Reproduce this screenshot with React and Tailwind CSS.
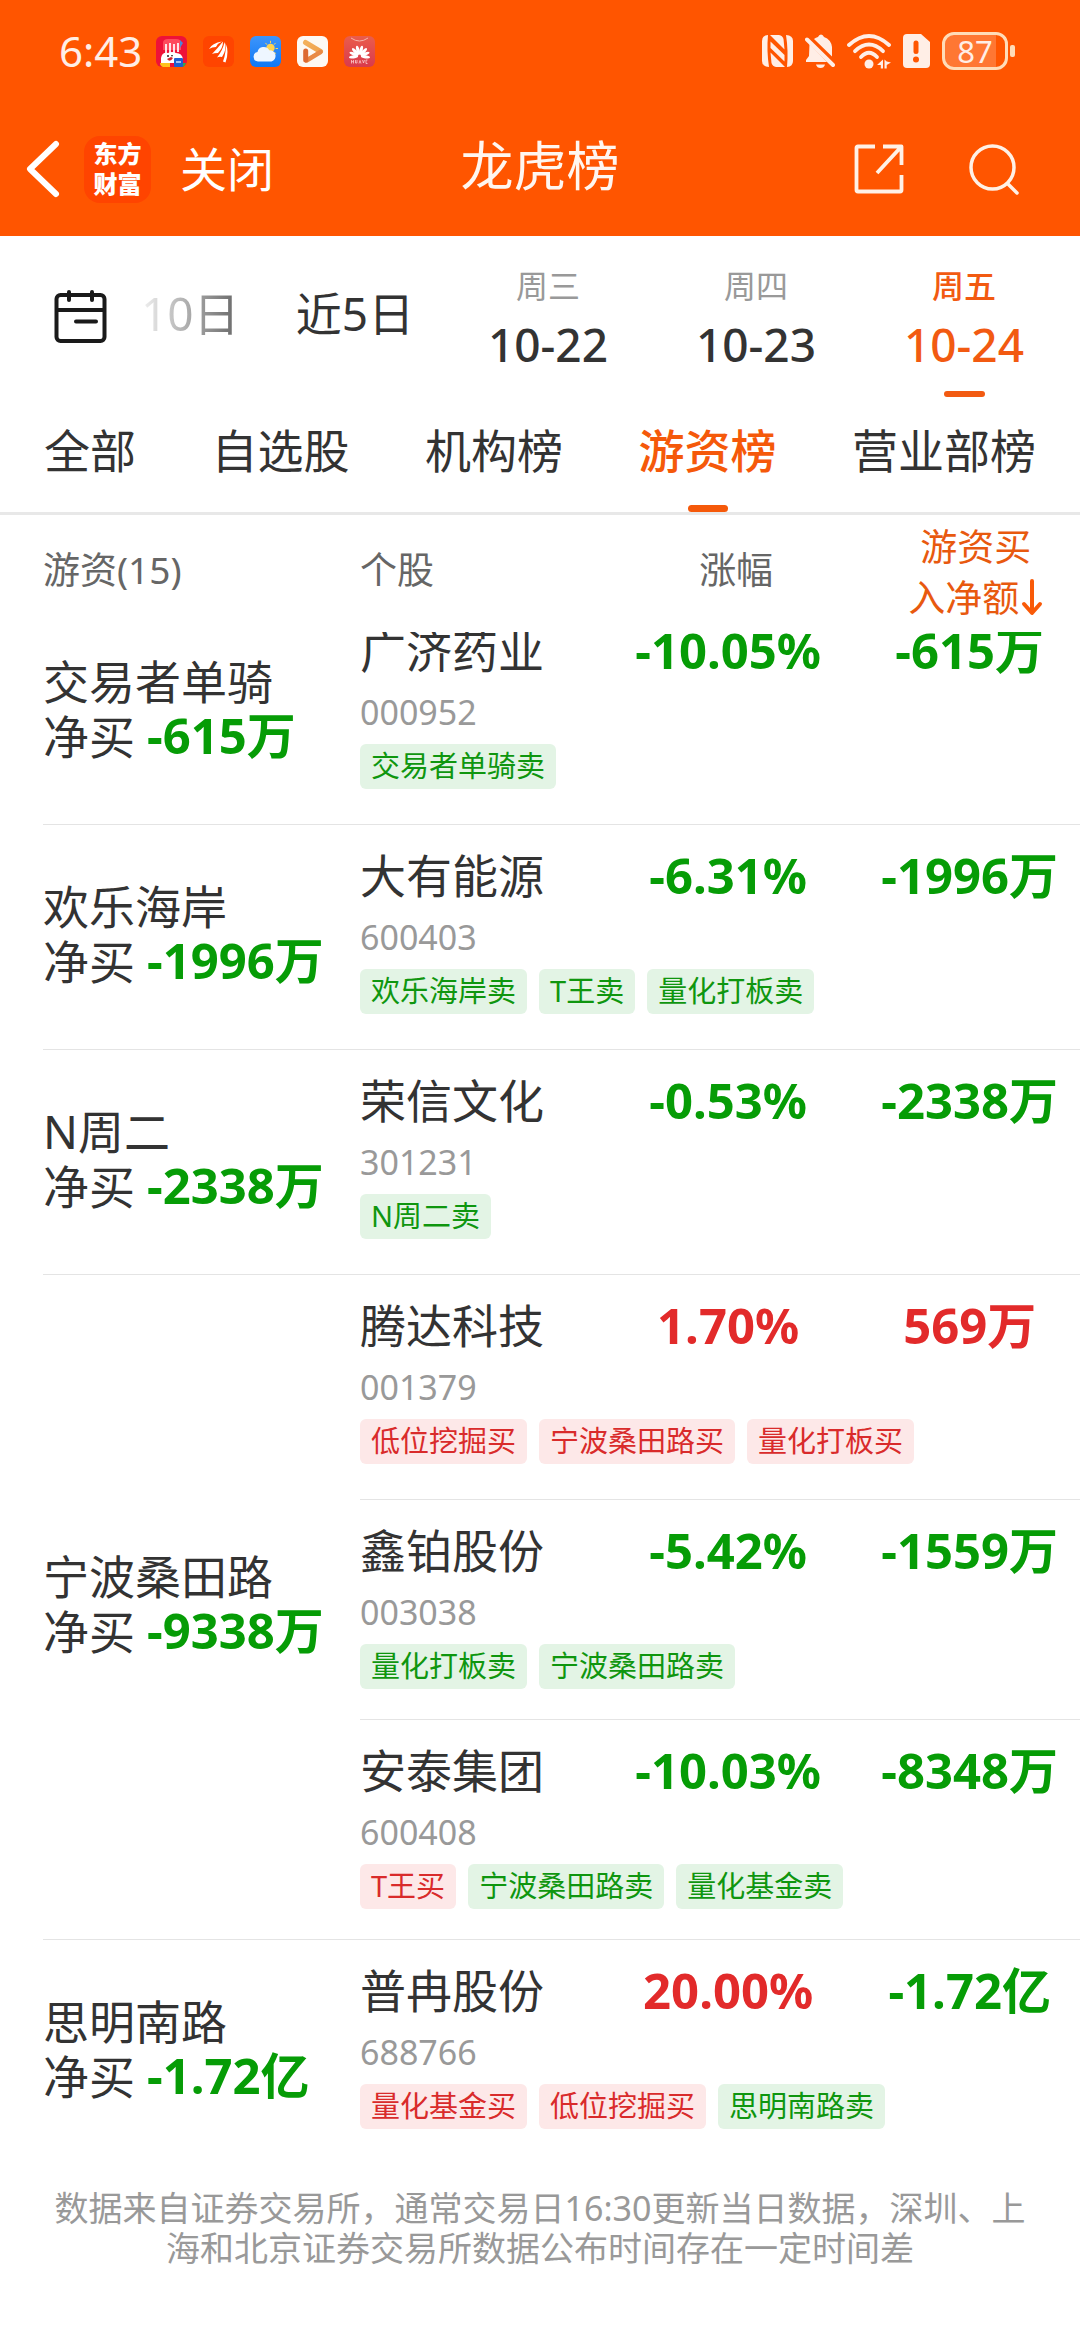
import React, { Fragment } from 'react';

const DATES = [
  { day: '周三', date: '10-22' },
  { day: '周四', date: '10-23' },
  { day: '周五', date: '10-24', active: true },
];

const TABS = ['全部', '自选股', '机构榜', '游资榜', '营业部榜'];

const GROUPS = [
  {
    name: '交易者单骑',
    net: '-615万',
    stocks: [
      { name: '广济药业', code: '000952', pct: '-10.05%', amount: '-615万', tags: ['交易者单骑卖'] },
    ],
  },
  {
    name: '欢乐海岸',
    net: '-1996万',
    stocks: [
      { name: '大有能源', code: '600403', pct: '-6.31%', amount: '-1996万', tags: ['欢乐海岸卖', 'T王卖', '量化打板卖'] },
    ],
  },
  {
    name: 'N周二',
    net: '-2338万',
    stocks: [
      { name: '荣信文化', code: '301231', pct: '-0.53%', amount: '-2338万', tags: ['N周二卖'] },
    ],
  },
  {
    name: '宁波桑田路',
    net: '-9338万',
    stocks: [
      { name: '腾达科技', code: '001379', pct: '1.70%', amount: '569万', tags: ['低位挖掘买', '宁波桑田路买', '量化打板买'] },
      { name: '鑫铂股份', code: '003038', pct: '-5.42%', amount: '-1559万', tags: ['量化打板卖', '宁波桑田路卖'], compact: true },
      { name: '安泰集团', code: '600408', pct: '-10.03%', amount: '-8348万', tags: ['T王买', '宁波桑田路卖', '量化基金卖'], compact: true },
    ],
  },
  {
    name: '思明南路',
    net: '-1.72亿',
    stocks: [
      { name: '普冉股份', code: '688766', pct: '20.00%', amount: '-1.72亿', tags: ['量化基金买', '低位挖掘买', '思明南路卖'] },
    ],
  },
];

const tone = (value) => (value.startsWith('-') ? 'text-[#069c06]' : 'text-[#e22a2a]');

/* ---------- status bar icons ---------- */

function SaleIcon() {
  return (
    <svg viewBox="0 0 31 31" className="size-[31px]">
      <rect width="31" height="31" rx="6" fill="#ee1238" />
      <path d="M7 14V7q0-4 5-4h8q5 0 5 4v7z" fill="#ff4b5c" />
      <path d="M10 8v9M14 7v10M18 8v9M22 7v9" stroke="#fff" strokeWidth="1.7" />
      <path d="M24 4l3 3-3 5z" fill="#4b86d8" />
      <path d="M5 22q1-6 7-5 4-2 8 0 6 0 7 6v4H5z" fill="#fff" />
      <circle cx="12" cy="20" r="1" fill="#222" />
      <path d="M11 23q3 4 6-1l-2-1z" fill="#d3222b" />
      <path d="M15 19l2 0-1 2z" fill="#222" />
      <path d="M4 27h10v4H7q-3-1-3-4z" fill="#ffc21c" />
      <rect x="18" y="22" width="9" height="9" rx="1" fill="#1f5fd0" />
      <path d="M20 26h5" stroke="#cfe1ff" strokeWidth="1.5" />
      <path d="M27 27h3q-1 3-3 4z" fill="#2fae4b" />
    </svg>
  );
}

function EastmoneyIcon() {
  return (
    <svg viewBox="0 0 31 31" className="size-[31px]">
      <rect width="31" height="31" rx="6" fill="#ff4400" />
      <g fill="#fff">
        <path d="M6 13Q9 7 19 5.500Q15 7 13 11Q9 11 6 13z" />
        <path d="M9 18Q14 13 20 5.500Q20 12 15 17Q11 17 9 18z" />
        <path d="M14 21.500Q20 14 21.500 6Q24 14 19 21Q16 20.500 14 21.500z" />
        <path d="M20 25.500Q23.500 16 22.500 7Q26.500 16 22.500 26.500z" />
      </g>
    </svg>
  );
}

function WeatherIcon() {
  return (
    <svg viewBox="0 0 31 31" className="size-[31px]">
      <defs>
        <linearGradient id="sky" x1="0" y1="0" x2="0" y2="1">
          <stop offset="0" stopColor="#3d95fb" />
          <stop offset="1" stopColor="#0f78f5" />
        </linearGradient>
      </defs>
      <rect width="31" height="31" rx="6" fill="url(#sky)" />
      <circle cx="20.500" cy="12" r="4.200" fill="#ffd451" />
      <path d="M20.500 5.200v1.600M25.300 7.200l-1 1.200M15.700 7.200l1 1.200M26 12.500h1.600M24.600 16.500l1.200 1" stroke="#ffd451" strokeWidth="1" strokeLinecap="round" />
      <path d="M8 25.500a4.800 4.800 0 0 1-.5-9.500 6.300 6.300 0 0 1 11.700-1.800 5.800 5.800 0 0 1 2.300 11.300z" fill="#eef6ff" />
    </svg>
  );
}

function VideoIcon() {
  return (
    <svg viewBox="0 0 31 31" className="size-[31px]">
      <defs>
        <linearGradient id="amber" x1="0" y1="0" x2="1" y2="1">
          <stop offset="0" stopColor="#f3b05c" />
          <stop offset="1" stopColor="#f0a24e" />
        </linearGradient>
      </defs>
      <rect width="31" height="31" rx="6" fill="#fdf9f4" />
      <path d="M8.500 6.500L23.500 15.500" stroke="url(#amber)" strokeWidth="5" strokeLinecap="round" />
      <path d="M23.500 16L9.500 24.500" stroke="#e98a45" strokeWidth="4.500" strokeLinecap="round" />
      <path d="M8.700 24V15" stroke="#dd6a32" strokeWidth="5" strokeLinecap="round" />
      <path d="M12 13l6 3.200-6 3.600z" fill="#fdf9f4" />
    </svg>
  );
}

function HuaweiIcon() {
  return (
    <svg viewBox="0 0 31 31" className="size-[31px]">
      <defs>
        <linearGradient id="rose" x1="0" y1="0" x2="0" y2="1">
          <stop offset="0" stopColor="#ea5d4c" />
          <stop offset="1" stopColor="#d93a4c" />
        </linearGradient>
      </defs>
      <rect width="31" height="31" rx="6" fill="url(#rose)" />
      <path d="M7 2q8.500 6 17 0" fill="none" stroke="#f7b3a8" strokeWidth="1" />
      <g fill="#fff">
        {[-98, -70, -43, -15, 15, 43, 70, 98].map((angle) => (
          <ellipse key={angle} cx="15.500" cy="14" rx="1.600" ry="4.600" transform={`rotate(${angle} 15.500 20)`} />
        ))}
      </g>
      <path d="M7.500 24v3.500M9.500 24v3.500M7.500 25.700h2M11.500 24v3h1.500v-3M15 27.500l1-3 1 3M18.500 24l1 3 1-3M22 24h1.500M22 27.500h1.500M22 24v3.500" stroke="#ffdcdc" strokeWidth=".7" fill="none" />
    </svg>
  );
}

function NfcIcon() {
  return (
    <svg viewBox="0 0 31 34" className="h-[34px] w-[31px]" fill="#ffeee6">
      <path d="M6 1Q0 1.500 0 7v20q0 5.500 7 6Q4.500 17 6 1z" />
      <path d="M25 33q6-.5 6-6V7q0-5.500-7-6 2.500 16 1 32z" />
      <path d="M8 1h9q3.500.5 4.500 4l1 10.500z" />
      <path d="M23 33h-9q-3.500-.5-4.500-4l-1-10.500z" />
      <path d="M8.500 7.500L22.500 21v6.500L8.500 14z" />
    </svg>
  );
}

function MutedBellIcon() {
  return (
    <svg viewBox="0 0 30 34" className="h-[34px] w-[30px]">
      <path d="M4.500 10L22 28H1v-2l3-4z" fill="#ffeee6" />
      <path d="M9 5q2-1.500 4-2 1-2.500 3-2.500T19 3q7 2.500 8 10v9.500z" fill="#ffeee6" />
      <path d="M11 30.500h9q-1 3.500-4.500 3.500T11 30.500z" fill="#ffeee6" />
      <path d="M2 5.500L28 31" stroke="#ffeee6" strokeWidth="4" strokeLinecap="round" />
    </svg>
  );
}

function WifiIcon() {
  return (
    <svg viewBox="0 0 44 35" className="h-[35px] w-[44px]">
      <g fill="none" stroke="#ffeee6" strokeWidth="3.800" strokeLinecap="round">
        <path d="M2 11Q22-7 42 11" />
        <path d="M8 17.200Q22 4 36 17.200" />
        <path d="M14 23Q22 14.500 30 23" />
      </g>
      <circle cx="22" cy="30" r="4.500" fill="#ffeee6" />
      <path d="M30 31l6-5.500v9h-2.200V31zM37.500 25.500v9h2.200V31l4.300-2.500-4.300-1z" fill="#ffeee6" />
    </svg>
  );
}

function SimAlertIcon() {
  return (
    <svg viewBox="0 0 27 34" className="h-[34px] w-[27px]">
      <path d="M4 0h14l9 8v22q0 4-4 4H4q-4 0-4-4V4q0-4 4-4z" fill="#ffeee6" />
      <path d="M13 9v8.500" stroke="#ff5500" strokeWidth="5" strokeLinecap="round" />
      <circle cx="13" cy="25.500" r="3" fill="#ff5500" />
    </svg>
  );
}

function Battery() {
  return (
    <div className="flex items-center gap-[2px]">
      <div className="flex h-[38px] w-[66px] items-center rounded-[12px] border-3 border-[#ffdcb8] bg-linear-to-r from-[#ff7733] from-85% to-[#ff5500] to-85%">
        <span className="w-full text-center text-[31px] leading-[32px] text-[#ffeee6]">87</span>
      </div>
      <div className="h-[12px] w-[5px] rounded-[2px] bg-[#ffdcb8]" />
    </div>
  );
}

/* ---------- page sections ---------- */

function StatusBar() {
  return (
    <div className="flex h-[102px] items-center justify-between pr-[65px] pl-[59px]">
      <div className="flex items-center gap-4">
        <span className="-mr-0.5 text-[42px] leading-[48px] text-[#ffeee6]">6:43</span>
        <SaleIcon />
        <EastmoneyIcon />
        <WeatherIcon />
        <VideoIcon />
        <HuaweiIcon />
      </div>
      <div className="flex items-center gap-3">
        <NfcIcon />
        <MutedBellIcon />
        <WifiIcon />
        <SimAlertIcon />
        <Battery />
      </div>
    </div>
  );
}

function NavBar() {
  return (
    <div className="grid h-[134px] grid-cols-[1fr_auto_1fr] items-center px-[26px] text-white">
      <div className="flex items-center">
        <button type="button" aria-label="返回">
          <svg viewBox="0 0 34 58" className="h-[58px] w-[34px]" fill="none" stroke="#fff" strokeWidth="6" strokeLinecap="round" strokeLinejoin="round">
            <path d="M30 4L4 29L30 54" />
          </svg>
        </button>
        <div className="ml-6 flex size-[67px] flex-col items-center justify-center rounded-[16px] bg-[#ff4400] text-[24px] leading-[30px] font-black">
          <span>东方</span>
          <span>财富</span>
        </div>
        <button type="button" className="ml-[29px] text-[47px] leading-[60px]">关闭</button>
      </div>
      <h1 className="pb-1.5 text-[53px] leading-[64px] text-[#fff6f0]">龙虎榜</h1>
      <div className="flex items-center justify-end gap-16 pr-[34px]">
        <button type="button" aria-label="分享">
          <svg viewBox="0 0 50 50" className="size-[50px]" fill="none" stroke="#fff1e6" strokeWidth="3.800" strokeLinejoin="round">
            <path d="M21 2.500H4q-1.500 0-1.500 1.500v42q0 1.500 1.500 1.500h42q1.500 0 1.500-1.500V31" />
            <path d="M29 2.500h18.500V21M47 3L23 29" />
          </svg>
        </button>
        <button type="button" aria-label="搜索">
          <svg viewBox="0 0 52 52" className="size-[52px]" fill="none" stroke="#fff1e6" strokeWidth="3.500" strokeLinecap="round">
            <circle cx="24.500" cy="24.500" r="21.500" />
            <path d="M39.500 40.500L49 50" />
          </svg>
        </button>
      </div>
    </div>
  );
}

function DateBar() {
  return (
    <div className="flex h-[166px] items-center pr-[12px] pl-[54px]">
      <button type="button" aria-label="选择日期" className="shrink-0 pb-1">
        <svg viewBox="0 0 54 54" className="size-[54px]" fill="none" stroke="#1a1a1a" strokeWidth="4" strokeLinecap="round">
          <rect x="2.500" y="5" width="48" height="46" rx="4" />
          <path d="M3 20h47M15 2v8M38 2v8M22 31.500h20" />
        </svg>
      </button>
      <button type="button" className="mb-3 ml-[33px] w-[93px] shrink-0 bg-linear-to-r from-[#f2f2f2] to-[#6e6e6e] bg-clip-text text-left text-[46px] leading-[60px] whitespace-nowrap text-transparent">
        10日
      </button>
      <button type="button" className="mb-3 flex-1 pl-8 text-center text-[46px] leading-[60px] whitespace-nowrap text-[#333]">
        近5日
      </button>
      {DATES.map(({ day, date, active }) => (
        <button
          key={date}
          type="button"
          className={`flex w-[208px] shrink-0 flex-col items-center self-stretch pt-6 ${active ? 'text-[#f25a11]' : 'text-[#333]'}`}
        >
          <span className={`text-[32px] leading-[52px] ${active ? 'font-medium' : 'text-[#999]'}`}>{day}</span>
          <span className="text-[46px] leading-[64px] font-medium">{date}</span>
          {active && <span className="mt-[15px] h-[6px] w-[41px] rounded-full bg-[#f25a11]" />}
        </button>
      ))}
    </div>
  );
}

function TabBar() {
  return (
    <div className="flex justify-between border-b-3 border-[#e8e8e8] px-11 pt-[14px]">
      {TABS.map((tab) => {
        const active = tab === '游资榜';
        return (
          <button
            key={tab}
            type="button"
            className={`flex h-24 flex-col items-center justify-between text-[46px] leading-[68px] ${active ? 'font-medium text-[#f5590a]' : 'text-[#333]'}`}
          >
            {tab}
            {active && <span className="h-[7px] w-[40px] rounded-full bg-[#f5590a]" />}
          </button>
        );
      })}
    </div>
  );
}

function Tag({ label }) {
  const sell = label.endsWith('卖');
  return (
    <span
      className={`flex h-[45px] items-center rounded-[6px] px-[11px] pb-0.5 text-[29px] leading-[40px] ${sell ? 'bg-[#e3f4e5] text-[#0f960f]' : 'bg-[#fde8e8] text-[#d92b2b]'}`}
    >
      {label}
    </span>
  );
}

function StockRows({ group, stock, first, clipped }) {
  const line = clipped ? '' : 'border-t border-[#e4e4e4]';
  const shift = clipped ? '-mt-8' : '';
  return (
    <Fragment>
      <tr className="align-top">
        {first && (
          <th scope="rowgroup" rowSpan={group.stocks.length * 2} className={`pb-2 text-left align-middle font-normal ${line}`}>
            <div className={shift}>
              <div className="text-[46px] leading-[54px] text-[#333]">{group.name}</div>
              <div className="text-[46px] leading-[54px] whitespace-nowrap text-[#333]">
                净买 <span className={`text-[49px] font-bold ${tone(group.net)}`}>{group.net}</span>
              </div>
            </div>
          </th>
        )}
        <td className={line}>
          <div className={`pt-[18px] pb-[2px] ${shift}`}>
            <div className="text-[46px] leading-[64px] whitespace-nowrap text-[#333]">{stock.name}</div>
            <div className="text-[34px] leading-[60px] text-[#999]">{stock.code}</div>
          </div>
        </td>
        <td className={line}>
          <div className={`pt-[18px] text-center text-[49px] leading-[64px] font-bold ${shift} ${tone(stock.pct)}`}>{stock.pct}</div>
        </td>
        <td className={`pl-3 ${line}`}>
          <div className={`pt-[18px] text-center text-[49px] leading-[64px] font-bold whitespace-nowrap ${shift} ${tone(stock.amount)}`}>{stock.amount}</div>
        </td>
      </tr>
      <tr>
        <td colSpan={3} className={stock.compact ? 'pb-[30px]' : 'pb-[35px]'}>
          <div className="flex gap-3">
            {stock.tags.map((tag) => (
              <Tag key={tag} label={tag} />
            ))}
          </div>
        </td>
      </tr>
    </Fragment>
  );
}

function Ranking() {
  return (
    <div className="pl-[43px]">
      <table className="w-full table-fixed">
        <colgroup>
          <col className="w-[317px]" />
          <col className="w-[24%]" />
          <col className="w-[23%]" />
          <col />
        </colgroup>
        <thead className="relative z-10 bg-white">
          <tr className="h-[117px] text-[37px] leading-[51px] text-[#666]">
            <th scope="col" className="pb-2 text-left font-normal">游资(15)</th>
            <th scope="col" className="pb-2 text-left font-normal">个股</th>
            <th scope="col" className="pb-2 pl-4 text-center font-normal">涨幅</th>
            <th scope="col" className="pl-6 text-center font-normal text-[#e8590f]">
              <button type="button" className="pb-1">
                游资买
                <span className="flex items-center justify-center">
                  入净额
                  <svg viewBox="0 0 22 38" className="ml-[2px] h-[38px] w-[22px]" fill="none" stroke="#f95a08" strokeWidth="4" strokeLinecap="round" strokeLinejoin="round">
                    <path d="M11 3v31M3 26l8 9 8-9" />
                  </svg>
                </span>
              </button>
            </th>
          </tr>
        </thead>
        <tbody>
          {GROUPS.map((group, g) =>
            group.stocks.map((stock, s) => (
              <StockRows key={stock.code} group={group} stock={stock} first={s === 0} clipped={g === 0} />
            )),
          )}
        </tbody>
      </table>
    </div>
  );
}

export default function App() {
  return (
    <div className="min-h-screen w-full overflow-x-hidden bg-white font-['Noto_Sans','Noto_Sans_CJK_SC',sans-serif]">
      <header className="bg-[#ff5500]">
        <StatusBar />
        <NavBar />
      </header>
      <DateBar />
      <TabBar />
      <Ranking />
      <p className="px-10 pt-6 pb-[70px] text-center text-[34px] leading-[40px] text-[#999]">
        数据来自证券交易所，通常交易日16:30更新当日数据，深圳、上
        <br />
        海和北京证券交易所数据公布时间存在一定时间差
      </p>
    </div>
  );
}
